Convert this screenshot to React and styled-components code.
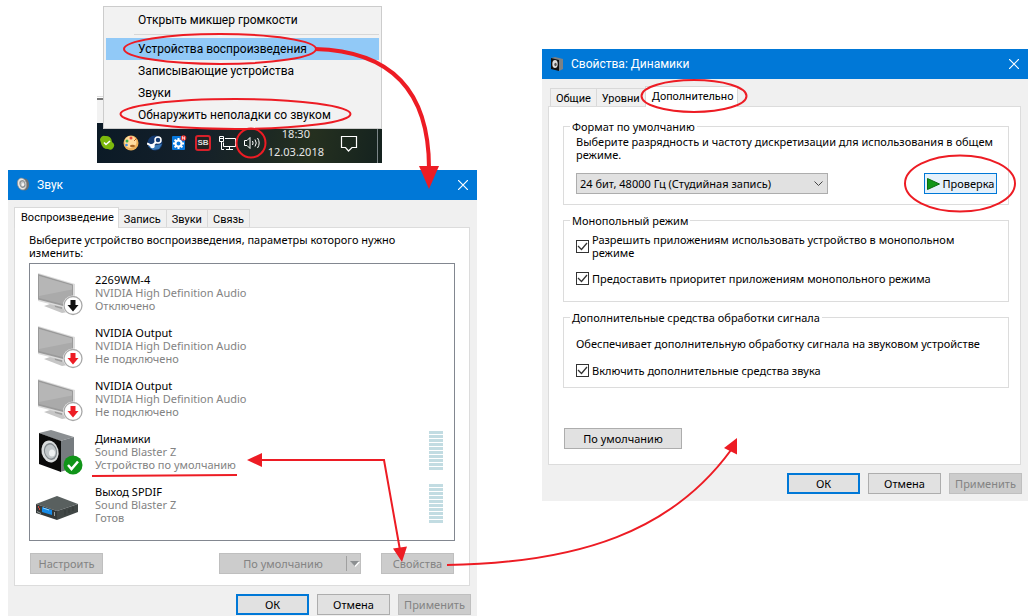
import React from 'react';
import styled, { createGlobalStyle } from 'styled-components';

const GlobalStyle = createGlobalStyle`
  * {
    box-sizing: border-box;
  }

  body {
    margin: 0;
    background: #fff;
    color: #000;
    font-family: 'Noto Sans', 'Open Sans', sans-serif;
    font-size: 11px;
    line-height: 13px;
  }

  button,
  select {
    font: inherit;
    color: inherit;
  }
`;

const devices = [
  { name: '2269WM-4', driver: 'NVIDIA High Definition Audio', state: 'Отключено', icon: 'monitor', arrow: '#111' },
  { name: 'NVIDIA Output', driver: 'NVIDIA High Definition Audio', state: 'Не подключено', icon: 'monitor', arrow: '#ed1c24' },
  { name: 'NVIDIA Output', driver: 'NVIDIA High Definition Audio', state: 'Не подключено', icon: 'monitor', arrow: '#ed1c24' },
  { name: 'Динамики', driver: 'Sound Blaster Z', state: 'Устройство по умолчанию', icon: 'speaker', meter: true },
  { name: 'Выход SPDIF', driver: 'Sound Blaster Z', state: 'Готов', icon: 'spdif', meter: true },
];

/** Device icons */
const MonitorIcon = ({ arrow }) => (
  <svg width="48" height="46" viewBox="0 0 48 46">
    <path d="M8 36l9-3 16 6-1 3-6 1z" fill="#c6c6c6" />
    <path d="M18 32l8 2v5l-7-2z" fill="#9d9d9d" />
    <path d="M2 3l37 11v25l-2 1L2 31z" fill="#dcdcdc" />
    <path d="M2 4l35 10.500v24L2 29.500z" fill="#9a9a9a" />
    <path d="M3 6l33 9.500v21L3 28z" fill="#aaa" />
    <path d="M3 6l33 9.500v4L3 26z" fill="#b6b6b6" />
    <circle cx="37" cy="35.500" r="10" fill="#fff" />
    <circle cx="37" cy="35.500" r="9" fill="#fff" stroke="#a8a8a8" strokeWidth="1.300" />
    <path d="M34.500 30h5v5h3L37 41.500 31.500 35h3z" fill={arrow} />
  </svg>
);

const SpeakerIcon = () => (
  <svg width="48" height="46" viewBox="0 0 48 46">
    <path d="M3 4l12-3 23 7-14 4z" fill="#8b8f92" />
    <path d="M24 12l14-4v31l-14 4z" fill="#767b7f" />
    <path d="M3 4l22 8v31L3 35z" fill="#0a0a0a" />
    <ellipse cx="14" cy="22.500" rx="8.500" ry="11" fill="#d9dcdd" transform="rotate(-14 14 22.500)" />
    <ellipse cx="14.500" cy="22.500" rx="6.500" ry="8.500" fill="#82898d" transform="rotate(-14 14.500 22.500)" />
    <ellipse cx="14.500" cy="22.500" rx="5.500" ry="7" fill="#c0c6c9" transform="rotate(-14 14.500 22.500)" />
    <ellipse cx="16" cy="24" rx="3" ry="3.500" fill="#edf0f1" />
    <circle cx="37" cy="36" r="9.500" fill="#109418" />
    <path d="M32 36l3.500 4 6.500-7.500" fill="none" stroke="#fff" strokeWidth="2.500" />
  </svg>
);

const SpdifIcon = () => (
  <svg width="48" height="46" viewBox="0 0 48 46">
    <path d="M0 22l21-8 21 8-21 7z" fill="#59605f" />
    <path d="M0 22l21 7v9L0 31z" fill="#343939" />
    <path d="M21 29l21-7v8l-21 8z" fill="#414746" />
    <path d="M6 25l10 3v5l-10-3z" fill="#168be8" />
    <path d="M7 26l6 2" stroke="#8ed4ff" />
    <path d="M2.500 24v2M3.500 26v2" stroke="#d5463b" />
    <path d="M18.500 30v4M1 29.500l4 2" stroke="#9aa1a1" />
    <path d="M29 28v5M33 27v4M37 25v4" stroke="#353a39" />
  </svg>
);

const icons = { monitor: MonitorIcon, speaker: SpeakerIcon, spdif: SpdifIcon };

/** Title bar icons */
const SoundIcon = () => (
  <svg width="16" height="16" viewBox="0 0 16 16">
    <ellipse cx="9" cy="7.500" rx="4" ry="6" fill="#6c6e6f" />
    <ellipse cx="6" cy="7" rx="4.500" ry="6" fill="#e9e8e5" stroke="#8a8a8a" strokeWidth="0.700" transform="rotate(-16 6 7)" />
    <ellipse cx="6.500" cy="7" rx="3" ry="4" fill="#8e9294" transform="rotate(-16 6.500 7)" />
    <ellipse cx="6.500" cy="7" rx="2" ry="2.700" fill="#c7c9ca" />
    <ellipse cx="7" cy="7.500" rx="1.200" ry="1.500" fill="#f5f5f5" />
  </svg>
);

const BoxIcon = () => (
  <svg width="16" height="16" viewBox="0 0 16 16">
    <path d="M1 2l4-1 8 2v10l-4 2z" fill="#7d8184" />
    <path d="M1 2l8 2v11l-8-2z" fill="#111" />
    <ellipse cx="5" cy="8" rx="2.700" ry="4" fill="#dcdcdc" />
    <ellipse cx="5.500" cy="8.500" rx="1.200" ry="1.700" fill="#555" />
  </svg>
);

const CloseIcon = () => (
  <svg width="10" height="10" viewBox="0 0 10 10">
    <path d="M0 0l10 10M10 0L0 10" stroke="#fff" strokeWidth="1.200" />
  </svg>
);

/** Tray icons */
const SkypeIcon = () => (
  <svg width="16" height="16" viewBox="0 0 16 16">
    <path d="M1 5a4 4 0 0 1 5-4 6 6 0 0 1 7 6 4 4 0 0 1-4 7A6.500 6.500 0 0 1 2 8z" fill="#7cb80c" />
    <path d="M5 7.500l2 2L11 6" fill="none" stroke="#fff" strokeWidth="1.600" />
  </svg>
);

const PaletteIcon = () => (
  <svg width="16" height="16" viewBox="0 0 16 16">
    <circle cx="8" cy="8" r="7.500" fill="#eeb25a" />
    <circle cx="7.500" cy="7" r="6" fill="#ffdc9e" />
    <circle cx="4" cy="6" r="1.500" fill="#3eae49" />
    <circle cx="8" cy="3" r="1.500" fill="#e7473c" />
    <circle cx="3.500" cy="10" r="1.300" fill="#3f8ee8" />
    <ellipse cx="9.500" cy="11" rx="2.500" ry="1.300" fill="#a86725" />
    <path d="M11 6l3-3" stroke="#b5652b" />
  </svg>
);

const SteamIcon = () => (
  <svg width="16" height="16" viewBox="0 0 16 16">
    <circle cx="8" cy="8" r="7.500" fill="#143a70" />
    <path d="M1 11l5 4 6-1 3-5-5 1z" fill="#3a7ab8" />
    <circle cx="11" cy="5" r="3" fill="#143a70" stroke="#fff" strokeWidth="1.500" />
    <circle cx="5.500" cy="11" r="2.300" fill="#fff" />
    <path d="M0 8.500l5 2.500 4-4" fill="none" stroke="#fff" strokeWidth="2" />
  </svg>
);

const GearIcon = () => (
  <svg width="16" height="16" viewBox="0 0 16 16">
    <rect x="1" y="1" width="13" height="14" rx="1" fill="#0878dc" />
    <circle cx="7.500" cy="8.500" r="3" fill="none" stroke="#fff" strokeWidth="2" />
    <path
      d="M7.500 3v2M7.500 12v2M2 8.500h2M11 8.500h2M3.600 4.600l1.400 1.400M10 11l1.400 1.400M3.600 12.400L5 11"
      stroke="#fff"
      strokeWidth="2"
    />
    <circle cx="12.500" cy="3" r="2.800" fill="#e8332f" />
    <path d="M11.500 4.500v-3l2 3v-3" fill="none" stroke="#fff" strokeWidth="0.700" />
  </svg>
);

const NetworkIcon = () => (
  <svg width="17" height="16" viewBox="0 0 17 16" fill="none" stroke="#fff">
    <path d="M6 3.500h10.500v8H4.500v-4M7 14.500h7M10.500 11.500v3" />
    <path d="M0.500 1.500h4v5h-4zM2.500 6.500v8H5M1 3.500h3" />
  </svg>
);

const VolumeIcon = () => (
  <svg width="17" height="16" viewBox="1 0 17 16" fill="none" stroke="#fff">
    <path d="M1.500 5.500h2.500L7 2.500v11l-3-3H1.500z" />
    <path d="M9.500 6a4 4 0 0 1 0 4M12 4.500a6 6 0 0 1 0 7M14.500 3a9 9 0 0 1 0 10" />
  </svg>
);

const MessageIcon = () => (
  <svg width="18" height="17" viewBox="0 0 18 17">
    <path d="M1.500 1.500h15v11h-4.500l-3.500 3.500-3-3.500h-4z" fill="none" stroke="#fff" strokeWidth="1.200" />
  </svg>
);

const Titlebar = ({ icon, children }) => (
  <St.Titlebar>
    {icon}
    <St.Title>{children}</St.Title>
    <St.Close aria-label="Закрыть">
      <CloseIcon />
    </St.Close>
  </St.Titlebar>
);

const Check = ({ children, gap }) => (
  <St.CheckLabel $gap={gap}>
    <St.Checkbox type="checkbox" defaultChecked />
    <St.Tick width="11" height="11" viewBox="0 0 11 11">
      <path d="M1 5l3.500 3.500L10 2" fill="none" stroke="#333" strokeWidth="1.300" />
    </St.Tick>
    <span>{children}</span>
  </St.CheckLabel>
);

const DialogActions = () => (
  <St.Actions>
    <St.Button $primary>ОК</St.Button>
    <St.Button>Отмена</St.Button>
    <St.Button disabled>Применить</St.Button>
  </St.Actions>
);

const Tray = () => (
  <St.TrayArea>
    <St.Backdrop />
    <St.Taskbar>
      <St.TrayIcons>
        <SkypeIcon />
        <PaletteIcon />
        <SteamIcon />
        <GearIcon />
        <St.Blaster>SB</St.Blaster>
        <NetworkIcon />
        <VolumeIcon />
      </St.TrayIcons>
      <St.Clock>
        <span>18:30</span>
        <span>12.03.2018</span>
      </St.Clock>
      <MessageIcon />
    </St.Taskbar>
    <St.Menu>
      <St.MenuItem>Открыть микшер громкости</St.MenuItem>
      <St.Separator />
      <St.MenuItem $active>Устройства воспроизведения</St.MenuItem>
      <St.MenuItem>Записывающие устройства</St.MenuItem>
      <St.MenuItem>Звуки</St.MenuItem>
      <St.MenuItem>Обнаружить неполадки со звуком</St.MenuItem>
    </St.Menu>
  </St.TrayArea>
);

const SoundDialog = () => (
  <St.Window>
    <Titlebar icon={<SoundIcon />}>Звук</Titlebar>
    <St.Body>
      <St.Tabs>
        <St.Tab $active>Воспроизведение</St.Tab>
        <St.Tab>Запись</St.Tab>
        <St.Tab>Звуки</St.Tab>
        <St.Tab>Связь</St.Tab>
      </St.Tabs>
      <St.SoundPanel>
        <St.Hint>Выберите устройство воспроизведения, параметры которого нужно изменить:</St.Hint>
        <St.DeviceList>
          {devices.map(({ name, driver, state, icon, arrow, meter }, i) => {
            const Icon = icons[icon];
            return (
              <St.Device key={i}>
                <Icon arrow={arrow} />
                <St.DeviceText>
                  <St.DeviceName>{name}</St.DeviceName>
                  <span>{driver}</span>
                  <span>{state}</span>
                </St.DeviceText>
                {meter && <St.Meter />}
              </St.Device>
            );
          })}
        </St.DeviceList>
        <St.PanelButtons>
          <St.Button disabled>Настроить</St.Button>
          <St.Split>
            <St.SplitMain disabled>По умолчанию</St.SplitMain>
            <St.SplitArrow disabled aria-label="Ещё">
              <svg width="10" height="6" viewBox="0 0 10 6">
                <path d="M1 1h9L5.500 6z" fill="#fff" />
                <path d="M0 0h9L4.500 5z" fill="#8c8f91" />
              </svg>
            </St.SplitArrow>
          </St.Split>
          <St.Button disabled>Свойства</St.Button>
        </St.PanelButtons>
      </St.SoundPanel>
      <DialogActions />
    </St.Body>
  </St.Window>
);

const PropertiesDialog = () => (
  <St.PropertiesWindow>
    <Titlebar icon={<BoxIcon />}>Свойства: Динамики</Titlebar>
    <St.Body>
      <St.Tabs>
        <St.Tab>Общие</St.Tab>
        <St.Tab>Уровни</St.Tab>
        <St.Tab $active>Дополнительно</St.Tab>
      </St.Tabs>
      <St.PropertiesPanel>
        <St.Group>
          <legend>Формат по умолчанию</legend>
          <p>Выберите разрядность и частоту дискретизации для использования в общем режиме.</p>
          <St.FormatRow>
            <St.SelectBox>
              <St.Select aria-label="Формат по умолчанию">
                <option>24 бит, 48000 Гц (Студийная запись)</option>
              </St.Select>
              <St.Chevron width="9" height="6" viewBox="0 0 9 6">
                <path d="M0.500 0.500l4 4 4-4" fill="none" stroke="#444" />
              </St.Chevron>
            </St.SelectBox>
            <St.TestButton>
              <svg width="13" height="12" viewBox="0 0 13 12">
                <path d="M0.500 0.500v11l12-5.500z" fill="#109618" stroke="#0a6b10" />
              </svg>
              Проверка
            </St.TestButton>
          </St.FormatRow>
        </St.Group>
        <St.Group $bottom={16}>
          <legend>Монопольный режим</legend>
          <Check gap={6}>Разрешить приложениям использовать устройство в монопольном режиме</Check>
          <Check gap={13}>Предоставить приоритет приложениям монопольного режима</Check>
        </St.Group>
        <St.Group>
          <legend>Дополнительные средства обработки сигнала</legend>
          <St.Note>Обеспечивает дополнительную обработку сигнала на звуковом устройстве</St.Note>
          <Check gap={14}>Включить дополнительные средства звука</Check>
        </St.Group>
        <St.DefaultsButton>По умолчанию</St.DefaultsButton>
      </St.PropertiesPanel>
      <DialogActions />
    </St.Body>
  </St.PropertiesWindow>
);

/** Red marks drawn over the windows */
const Marks = () => (
  <St.Marks viewBox="0 0 1034 616" preserveAspectRatio="none" fill="none" stroke="#ed1c24" strokeWidth="2">
    <ellipse cx="220" cy="49" rx="96" ry="15" />
    <ellipse cx="235.500" cy="114" rx="115" ry="15" />
    <circle cx="251" cy="143" r="14.500" />
    <path d="M315 49C390 51 429 90 429 168" strokeWidth="4" />
    <path d="M419 166h20l-10 23z" fill="#ed1c24" stroke="none" />
    <ellipse cx="694" cy="96" rx="52.500" ry="16" />
    <ellipse cx="960" cy="183.500" rx="55" ry="28" />
    <path d="M92 476l145-1" />
    <path d="M260 460h124l16 90" />
    <path d="M247 460l15-7v14zM402 562l-9-13.500 14-2z" fill="#ed1c24" stroke="none" />
    <path d="M447 565C580 563 672 531 731 450" />
    <path d="M737 438l-13 10 13 6.500z" fill="#ed1c24" stroke="none" />
  </St.Marks>
);

const App = () => {
  return (
    <>
      <GlobalStyle />
      <St.Page>
        <div>
          <Tray />
          <SoundDialog />
        </div>
        <PropertiesDialog />
        <Marks />
      </St.Page>
    </>
  );
};

export default App;

const St = {
  Page: styled.main`
    position: relative;
    display: grid;
    grid-template-columns: 469fr 486fr;
    column-gap: 65px;
    align-items: start;
    padding: 0 6px 0 8px;
    overflow: hidden;
  `,

  Marks: styled.svg`
    position: absolute;
    top: 0;
    left: 0;
    width: 100%;
    height: 616px;
    pointer-events: none;
  `,

  TrayArea: styled.div`
    display: grid;
    width: 285px;
    height: 163px;
    margin: 0 0 7px 89px;

    > * {
      grid-area: 1 / 1;
    }
  `,

  Backdrop: styled.div`
    height: 32px;
    margin-top: 96px;
    border-top: 1px solid #ddd;
    background: linear-gradient(#fff 1px, #777 1px, #777 3px, #f2f2f2 3px);
  `,

  Taskbar: styled.div`
    display: flex;
    align-items: center;
    align-self: end;
    height: 40px;
    padding: 0 24px 0 2px;
    background:
      linear-gradient(#7b8587, #7b8587) right 4px top 0 / 1px 100% no-repeat,
      linear-gradient(100deg, #0b1a26 0%, #14202a 35%, #1d2923 60%, #25301f 75%, #14221f 100%);
  `,

  TrayIcons: styled.div`
    display: flex;
    align-items: center;
    gap: 8px;
    flex: 1;
  `,

  Blaster: styled.span`
    width: 16px;
    border: 2px solid #d6202a;
    border-radius: 3px;
    background: #222;
    color: #ddd;
    font: bold 8px/12px 'Liberation Sans', sans-serif;
    text-align: center;
  `,

  Clock: styled.div`
    display: flex;
    flex-direction: column;
    align-items: center;
    margin-right: 16px;
    color: #e6e6e6;
    font-size: 11px;
    line-height: 18px;
  `,

  Menu: styled.div`
    align-self: start;
    height: 123px;
    margin: 6px 0 0 6px;
    padding: 2px;
    border: 1px solid #ccc;
    background: #f2f2f2;
  `,

  MenuItem: styled.button`
    display: block;
    width: 100%;
    height: 22px;
    padding: 0 0 0 32px;
    border: 0;
    background: ${({ $active }) => ($active ? '#91c9f7' : 'transparent')};
    font-family: Roboto, sans-serif;
    font-size: 12px;
    text-align: left;
  `,

  Separator: styled.div`
    height: 1px;
    margin: 3px 0 3px 28px;
    background: #d7d7d7;
  `,

  Window: styled.section`
    background: #f0f0f0;
  `,

  PropertiesWindow: styled.section`
    margin-top: 49px;
    padding-bottom: 6px;
    background: #f0f0f0;
  `,

  Titlebar: styled.header`
    display: flex;
    align-items: center;
    height: 30px;
    padding: 0 4px 0 8px;
    background: #0078d7;
    color: #fff;
  `,

  Title: styled.h1`
    flex: 1;
    margin: 0 0 0 5px;
    font-family: Roboto, sans-serif;
    font-size: 12px;
    font-weight: normal;
  `,

  Close: styled.button`
    display: flex;
    align-items: center;
    justify-content: center;
    width: 20px;
    height: 20px;
    padding: 0;
    border: 0;
    background: transparent;
  `,

  Body: styled.div`
    padding: 7px 7px 1px 6px;
  `,

  Tabs: styled.div`
    display: flex;
    align-items: flex-end;
    height: 20px;
  `,

  Tab: styled.button`
    height: ${({ $active }) => ($active ? '21px' : '18px')};
    margin-bottom: ${({ $active }) => ($active ? '-1px' : '0')};
    padding: ${({ $active }) => ($active ? '0 4px 2px 6px' : '2px 5px 0')};
    border: 1px solid #d9d9d9;
    border-bottom: 0;
    background: ${({ $active }) => ($active ? '#fff' : '#f0f0f0')};
    font-family: Roboto, sans-serif;
    white-space: nowrap;

    &:first-child {
      margin-left: ${({ $active }) => ($active ? '0' : '2px')};
    }

    & + & {
      margin-left: -1px;
    }
  `,

  SoundPanel: styled.div`
    height: 359px;
    padding: 5px 14px 0;
    border: 1px solid #dcdcdc;
    background: #fff;
  `,

  Hint: styled.p`
    margin: 0 0 4px;
    padding-right: 30px;
  `,

  DeviceList: styled.ul`
    height: 278px;
    margin: 0;
    padding: 6px 11px 0 6px;
    border: 1px solid #828790;
    list-style: none;
  `,

  Device: styled.li`
    display: flex;
    height: 53px;
    color: #838383;

    > svg {
      flex: none;
    }
  `,

  DeviceText: styled.div`
    display: flex;
    flex-direction: column;
    flex: 1;
    padding: 3px 0 0 11px;
  `,

  DeviceName: styled.span`
    color: #000;
  `,

  Meter: styled.div`
    width: 14px;
    height: 39px;
    margin-top: 2px;
    background: repeating-linear-gradient(#c2dce2 0 3px, #fff 3px 4px);
  `,

  PanelButtons: styled.div`
    display: flex;
    gap: 20px;
    margin-top: 12px;
    padding: 0 1px;

    > :first-child {
      margin-right: auto;
    }
  `,

  Button: styled.button`
    width: 73px;
    height: 21px;
    padding: 0;
    border: ${({ $primary }) => ($primary ? '2px solid #0078d7' : '1px solid #adadad')};
    background: #e1e1e1;
    line-height: 12px;
    white-space: nowrap;

    &:disabled {
      border-color: #bfbfbf;
      background: #ccc;
      color: #838383;
    }
  `,

  Split: styled.div`
    display: flex;
    width: 142px;
    height: 21px;
    border: 1px solid #bfbfbf;
    background: #ccc;
    color: #838383;
  `,

  SplitMain: styled.button`
    flex: 1;
    padding: 0;
    border: 0;
    background: transparent;
    color: inherit;
    line-height: 12px;
  `,

  SplitArrow: styled.button`
    width: 14px;
    margin: 2px 0;
    padding: 0 0 0 2px;
    border: 0;
    border-left: 1px solid #a0a0a0;
    background: transparent;
    line-height: 0;
  `,

  Actions: styled.div`
    display: flex;
    justify-content: flex-end;
    gap: 8px;
    margin: 8px -1px 0 0;
  `,

  PropertiesPanel: styled.div`
    height: 359px;
    padding: 13px 11px 0 14px;
    border: 1px solid #dcdcdc;
    background: #fff;
  `,

  Group: styled.fieldset`
    min-width: 0;
    margin: 0 0 9px;
    padding: 0 11px ${({ $bottom = 10 }) => $bottom}px 12px;
    border: 1px solid #dcdcdc;

    legend {
      margin-left: -6px;
      padding: 0 2px;
    }

    p {
      margin: 2px 0 12px;
    }
  `,

  FormatRow: styled.div`
    display: flex;
    justify-content: space-between;
  `,

  SelectBox: styled.div`
    position: relative;
    width: 252px;
    height: 21px;
  `,

  Select: styled.select`
    width: 100%;
    height: 100%;
    padding: 0 3px;
    border: 1px solid #adadad;
    border-radius: 0;
    background: #e1e1e1;
    appearance: none;
  `,

  Chevron: styled.svg`
    position: absolute;
    top: 8px;
    right: 5px;
    pointer-events: none;
  `,

  TestButton: styled.button`
    display: flex;
    align-items: center;
    justify-content: center;
    gap: 3px;
    width: 73px;
    height: 21px;
    padding: 0;
    border: 1px solid #0078d7;
    background: #e5f1fb;
  `,

  CheckLabel: styled.label`
    position: relative;
    display: flex;
    align-items: center;
    gap: 3px;
    margin-top: ${({ $gap = 0 }) => $gap}px;
  `,

  Checkbox: styled.input`
    flex: none;
    width: 13px;
    height: 13px;
    margin: 0;
    border: 1px solid #333;
    background: #fff;
    appearance: none;
  `,

  Tick: styled.svg`
    position: absolute;
    left: 1px;
    visibility: hidden;

    input:checked + & {
      visibility: visible;
    }
  `,

  Note: styled.div`
    padding-top: 13px;
  `,

  DefaultsButton: styled.button`
    width: 118px;
    height: 21px;
    margin: 31px 0 0 1px;
    padding: 0;
    border: 1px solid #adadad;
    background: #e1e1e1;
    line-height: 12px;
  `,
};
